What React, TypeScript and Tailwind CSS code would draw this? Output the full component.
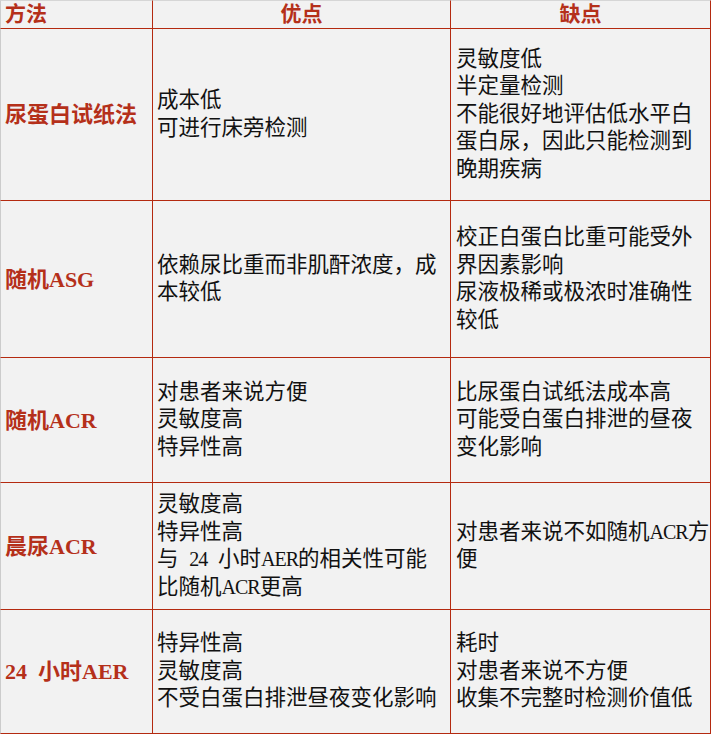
const rows = [
  {
    method: "尿蛋白试纸法",
    pros: ["成本低", "可进行床旁检测"],
    cons: ["灵敏度低", "半定量检测", "不能很好地评估低水平白", "蛋白尿，因此只能检测到", "晚期疾病"],
  },
  {
    method: "随机ASG",
    pros: ["依赖尿比重而非肌酐浓度，成", "本较低"],
    cons: ["校正白蛋白比重可能受外", "界因素影响", "尿液极稀或极浓时准确性", "较低"],
  },
  {
    method: "随机ACR",
    pros: ["对患者来说方便", "灵敏度高", "特异性高"],
    cons: ["比尿蛋白试纸法成本高", "可能受白蛋白排泄的昼夜", "变化影响"],
  },
  {
    method: "晨尿ACR",
    pros: ["灵敏度高", "特异性高", "与  24  小时AER的相关性可能", "比随机ACR更高"],
    cons: ["对患者来说不如随机ACR方", "便"],
  },
  {
    method: "24  小时AER",
    pros: ["特异性高", "灵敏度高", "不受白蛋白排泄昼夜变化影响"],
    cons: ["耗时", "对患者来说不方便", "收集不完整时检测价值低"],
  },
];

const font = "font-['Liberation_Serif','Noto_Sans_CJK_SC',serif]";

// latin runs are narrower in the original (half-width), so squeeze them a bit
const Line = ({ text }: { text: string }) => {
  const parts = text.split(/([A-Za-z0-9]+)/);
  return (
    <div>
      {parts.map((p, i) =>
        /^[A-Za-z0-9]+$/.test(p) ? (
          <span key={i} className="text-[20px] tracking-[-1px]">
            {p}
          </span>
        ) : (
          <span key={i}>{p}</span>
        )
      )}
    </div>
  );
};

const Lines = ({ lines }: { lines: string[] }) => (
  <div className="leading-[27.5px] whitespace-pre">
    {lines.map((l, i) => (
      <Line key={i} text={l} />
    ))}
  </div>
);

export default function App() {
  return (
    <div className={`w-[711px] h-[734px] overflow-hidden bg-[#f2f2f2] ${font}`}>
      <div className="grid grid-cols-[153px_298px_260px] grid-rows-[29px_172px_157px_125px_127px_124px]">
        <div className="flex items-center pl-1 border-t border-l border-t-[#d6d6d6] border-l-[#cccccc] border-r border-b border-r-[#b42a10] border-b-[#b42a10] text-[21px] font-bold text-[#b5301a]">
          方法
        </div>
        <div className="flex items-center justify-center border-t border-t-[#d6d6d6] border-r border-b border-r-[#b42a10] border-b-[#b42a10] text-[21px] font-bold text-[#b5301a]">
          优点
        </div>
        <div className="flex items-center justify-center border-t border-t-[#d6d6d6] border-r border-b border-r-[#b42a10] border-b-[#b42a10] text-[21px] font-bold text-[#b5301a]">
          缺点
        </div>
        {rows.map((r) => (
          <>
            <div
              key={r.method + "m"}
              className="flex items-center pl-1 border-l border-l-[#cccccc] border-r border-b border-r-[#b42a10] border-b-[#b42a10] text-[22px] font-bold text-[#b5301a] whitespace-pre"
            >
              {r.method}
            </div>
            <div
              key={r.method + "p"}
              className="flex items-center pl-1 border-r border-b border-[#b42a10] text-[21.5px] text-[#111111]"
            >
              <Lines lines={r.pros} />
            </div>
            <div
              key={r.method + "c"}
              className="flex items-center pl-[5px] border-r border-b border-[#b42a10] text-[21.5px] text-[#111111]"
            >
              <Lines lines={r.cons} />
            </div>
          </>
        ))}
      </div>
    </div>
  );
}
